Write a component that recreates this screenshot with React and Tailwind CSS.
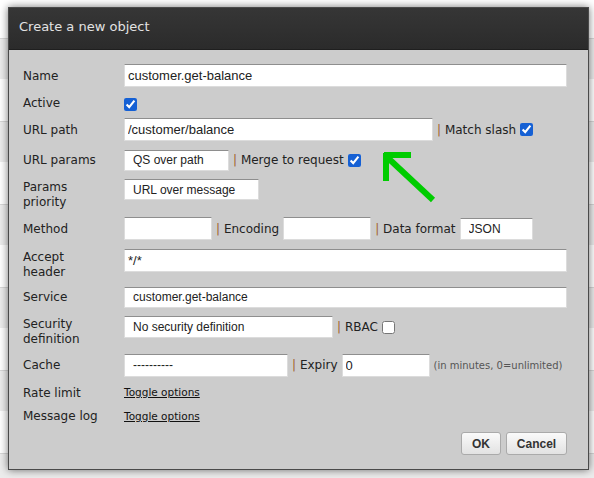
import React from "react";

const LABEL = "font-['DejaVu_Sans',sans-serif] text-[12px] text-[#222]";
const FIELD =
  "bg-white border border-[#dcdcdc] border-t-[#8e8e8e] outline-none font-['Liberation_Sans',Arial,sans-serif] text-[#222]";

function Sep({ children }) {
  return (
    <span className={`${LABEL} whitespace-nowrap`}>
      <span className="text-[#a0622d]">|</span> {children}
    </span>
  );
}

function Check({ checked }) {
  return (
    <input
      type="checkbox"
      defaultChecked={checked}
      className="w-[13px] h-[13px] m-0 accent-[#1560d4]"
    />
  );
}

function Box({ value, className }) {
  return <input readOnly value={value} className={`${FIELD} ${className}`} />;
}

function Row({ label, className, children }) {
  return (
    <div className={`flex ${className}`}>
      <div className={`w-[101px] shrink-0 leading-[15px] pt-[1px] ${LABEL}`}>{label}</div>
      <div className="flex-1 flex items-center gap-[4px]">{children}</div>
    </div>
  );
}

export default function App() {
  const bands = [0, 1, 2, 3, 4, 5];

  return (
    <div className="relative w-[594px] h-[478px] overflow-hidden bg-white">
      {/* page behind the dialog */}
      <div className="flex flex-col">
        <div className="h-[38px]" />
        {bands.map((b) => (
          <div key={b} className="flex flex-col">
            <div className="h-[41px] bg-[#ececec] border-t border-[#d6d6d6]" />
            <div className="h-[42px] bg-white" />
          </div>
        ))}
      </div>

      {/* DIALOG */}
      <div className="absolute left-[8px] top-[7px] w-[581px] flex flex-col border border-[#4a4a4a] shadow-[0_0_8px_rgba(0,0,0,0.55)]">
        <div className="h-[42px] flex items-center pl-[10px] pb-[3px] bg-gradient-to-b from-[#363636] to-[#2b2b2b] border-b border-[#1f1f1f] font-['DejaVu_Sans',sans-serif] text-[13px] text-[#e2e2e2]">
          Create a new object
        </div>

        <div className="bg-[#cccccc] flex flex-col pl-[14px] pr-[21px] pt-[11px] pb-[14px] h-[419px]">
          <Row label="Name" className="h-[29px] items-center">
            <Box value="customer.get-balance" className="w-full h-[23px] px-[3px] text-[13px]" />
          </Row>
          <Row label="Active" className="h-[25px] items-center">
            <span className="pt-[3px] flex"><Check checked /></span>
          </Row>
          <Row label="URL path" className="h-[29px] items-center">
            <Box value="/customer/balance" className="w-[309px] h-[23px] px-[3px] text-[13px]" />
            <Sep>Match slash</Sep>
            <Check checked />
          </Row>
          <Row label="URL params" className="h-[32px] items-center">
            <Box value="QS over path" className="w-[105px] h-[21px] px-[8px] text-[12px]" />
            <Sep>Merge to request</Sep>
            <Check checked />
          </Row>
          <Row label={<>Params<br />priority</>} className="h-[36px] items-start pt-[3px]">
            <Box value="URL over message" className="w-[135px] h-[21px] px-[8px] text-[12px]" />
          </Row>
          <Row label="Method" className="h-[33px] items-center">
            <Box value="" className="w-[88px] h-[23px] px-[3px] text-[13px]" />
            <Sep>Encoding</Sep>
            <Box value="" className="w-[88px] h-[23px] px-[3px] text-[13px]" />
            <Sep>Data format</Sep>
            <Box value="JSON" className="w-[73px] h-[22px] px-[8px] text-[12px]" />
          </Row>
          <Row label={<>Accept<br />header</>} className="h-[36px] items-start pt-[4px]">
            <Box value="*/*" className="w-full h-[23px] px-[3px] text-[13px]" />
          </Row>
          <Row label="Service" className="h-[32px] items-center">
            <Box value="customer.get-balance" className="w-full h-[21px] px-[8px] text-[12px]" />
          </Row>
          <Row label={<>Security<br />definition</>} className="h-[37px] items-start pt-[3px]">
            <Box value="No security definition" className="w-[209px] h-[22px] px-[8px] text-[12px]" />
            <Sep>RBAC</Sep>
            <Check />
          </Row>
          <Row label="Cache" className="h-[30px] items-center">
            <Box value="----------" className="w-[164px] h-[23px] px-[8px] text-[12px]" />
            <Sep>Expiry</Sep>
            <Box value="0" className="w-[88px] h-[23px] px-[3px] text-[13px]" />
            <span className="font-['DejaVu_Sans',sans-serif] text-[10px] text-[#555] whitespace-nowrap">
              (in minutes, 0=unlimited)
            </span>
          </Row>
          <Row label="Rate limit" className="h-[25px] items-center">
            <a className="font-['DejaVu_Sans',sans-serif] text-[10.5px] text-[#111] underline pt-[1px]">Toggle options</a>
          </Row>
          <Row label="Message log" className="h-[22px] items-center">
            <a className="font-['DejaVu_Sans',sans-serif] text-[10.5px] text-[#111] underline pt-[1px]">Toggle options</a>
          </Row>

          <div className="flex justify-end gap-[5px] pt-[5px]">
            <button className="w-[40px] h-[23px] rounded-[3px] border border-[#aaa] bg-gradient-to-b from-[#fafafa] to-[#e2e2e2] font-['Liberation_Sans',Arial,sans-serif] font-bold text-[12px] text-[#333]">
              OK
            </button>
            <button className="w-[61px] h-[23px] rounded-[3px] border border-[#aaa] bg-gradient-to-b from-[#fafafa] to-[#e2e2e2] font-['Liberation_Sans',Arial,sans-serif] font-bold text-[12px] text-[#333]">
              Cancel
            </button>
          </div>
        </div>
      </div>

      {/* green arrow annotation */}
      <svg className="absolute left-0 top-0 pointer-events-none" width="594" height="478">
        <g stroke="#00cc00" strokeWidth="6" fill="none" strokeLinecap="butt">
          <line x1="433" y1="200" x2="388" y2="158" />
          <line x1="384" y1="155" x2="411" y2="155" />
          <line x1="386" y1="153" x2="386" y2="181" />
        </g>
      </svg>
    </div>
  );
}
